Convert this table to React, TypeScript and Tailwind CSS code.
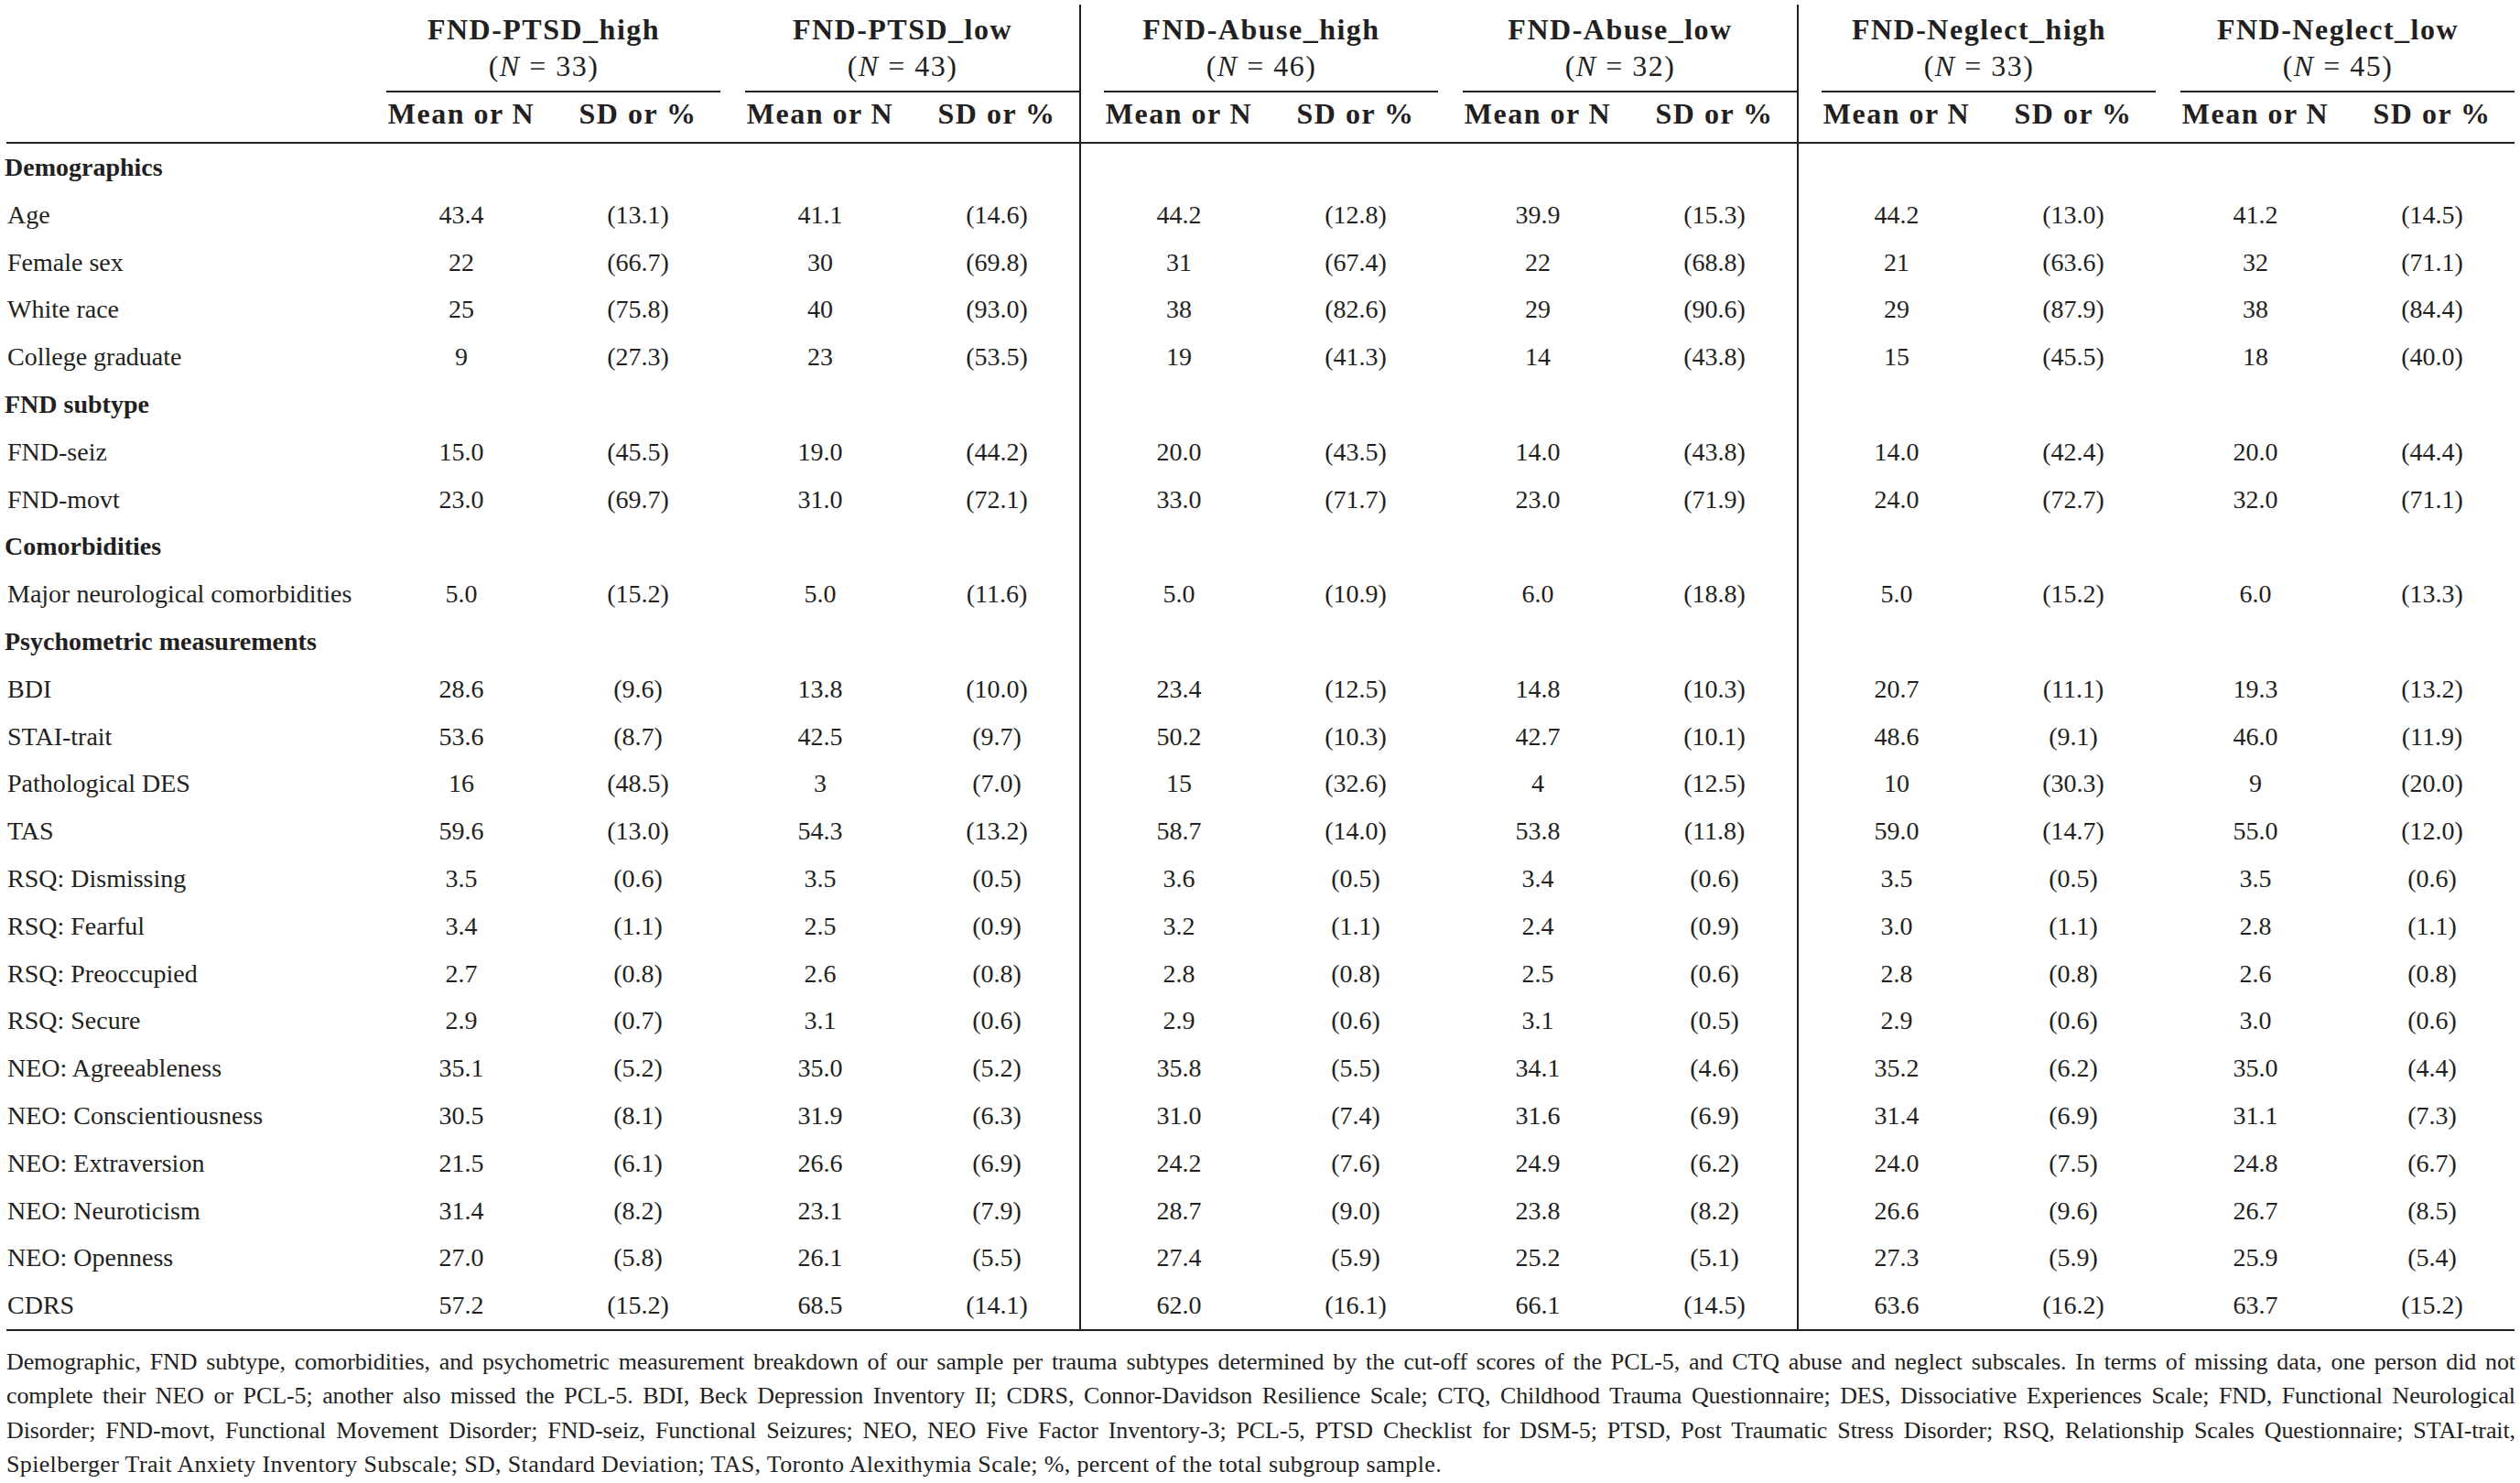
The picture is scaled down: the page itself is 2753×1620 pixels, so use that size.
import React from "react";

type Row =
  | { kind: "section"; label: string }
  | { kind: "data"; label: string; v: string[] };

const groups = [
  { name: "FND-PTSD_high", n: 33 },
  { name: "FND-PTSD_low", n: 43 },
  { name: "FND-Abuse_high", n: 46 },
  { name: "FND-Abuse_low", n: 32 },
  { name: "FND-Neglect_high", n: 33 },
  { name: "FND-Neglect_low", n: 45 },
];

const d = (label: string, s: string): Row => ({ kind: "data", label, v: s.split(" ") });
const sec = (label: string): Row => ({ kind: "section", label });

const rows: Row[] = [
  sec("Demographics"),
  d("Age", "43.4 (13.1) 41.1 (14.6) 44.2 (12.8) 39.9 (15.3) 44.2 (13.0) 41.2 (14.5)"),
  d("Female sex", "22 (66.7) 30 (69.8) 31 (67.4) 22 (68.8) 21 (63.6) 32 (71.1)"),
  d("White race", "25 (75.8) 40 (93.0) 38 (82.6) 29 (90.6) 29 (87.9) 38 (84.4)"),
  d("College graduate", "9 (27.3) 23 (53.5) 19 (41.3) 14 (43.8) 15 (45.5) 18 (40.0)"),
  sec("FND subtype"),
  d("FND-seiz", "15.0 (45.5) 19.0 (44.2) 20.0 (43.5) 14.0 (43.8) 14.0 (42.4) 20.0 (44.4)"),
  d("FND-movt", "23.0 (69.7) 31.0 (72.1) 33.0 (71.7) 23.0 (71.9) 24.0 (72.7) 32.0 (71.1)"),
  sec("Comorbidities"),
  d("Major neurological comorbidities", "5.0 (15.2) 5.0 (11.6) 5.0 (10.9) 6.0 (18.8) 5.0 (15.2) 6.0 (13.3)"),
  sec("Psychometric measurements"),
  d("BDI", "28.6 (9.6) 13.8 (10.0) 23.4 (12.5) 14.8 (10.3) 20.7 (11.1) 19.3 (13.2)"),
  d("STAI-trait", "53.6 (8.7) 42.5 (9.7) 50.2 (10.3) 42.7 (10.1) 48.6 (9.1) 46.0 (11.9)"),
  d("Pathological DES", "16 (48.5) 3 (7.0) 15 (32.6) 4 (12.5) 10 (30.3) 9 (20.0)"),
  d("TAS", "59.6 (13.0) 54.3 (13.2) 58.7 (14.0) 53.8 (11.8) 59.0 (14.7) 55.0 (12.0)"),
  d("RSQ: Dismissing", "3.5 (0.6) 3.5 (0.5) 3.6 (0.5) 3.4 (0.6) 3.5 (0.5) 3.5 (0.6)"),
  d("RSQ: Fearful", "3.4 (1.1) 2.5 (0.9) 3.2 (1.1) 2.4 (0.9) 3.0 (1.1) 2.8 (1.1)"),
  d("RSQ: Preoccupied", "2.7 (0.8) 2.6 (0.8) 2.8 (0.8) 2.5 (0.6) 2.8 (0.8) 2.6 (0.8)"),
  d("RSQ: Secure", "2.9 (0.7) 3.1 (0.6) 2.9 (0.6) 3.1 (0.5) 2.9 (0.6) 3.0 (0.6)"),
  d("NEO: Agreeableness", "35.1 (5.2) 35.0 (5.2) 35.8 (5.5) 34.1 (4.6) 35.2 (6.2) 35.0 (4.4)"),
  d("NEO: Conscientiousness", "30.5 (8.1) 31.9 (6.3) 31.0 (7.4) 31.6 (6.9) 31.4 (6.9) 31.1 (7.3)"),
  d("NEO: Extraversion", "21.5 (6.1) 26.6 (6.9) 24.2 (7.6) 24.9 (6.2) 24.0 (7.5) 24.8 (6.7)"),
  d("NEO: Neuroticism", "31.4 (8.2) 23.1 (7.9) 28.7 (9.0) 23.8 (8.2) 26.6 (9.6) 26.7 (8.5)"),
  d("NEO: Openness", "27.0 (5.8) 26.1 (5.5) 27.4 (5.9) 25.2 (5.1) 27.3 (5.9) 25.9 (5.4)"),
  d("CDRS", "57.2 (15.2) 68.5 (14.1) 62.0 (16.1) 66.1 (14.5) 63.6 (16.2) 63.7 (15.2)"),
];

const GRID = "grid grid-cols-[396px_repeat(6,206px_180px_6px)]";
const hasDivider = (g: number) => g === 1 || g === 3;

function Gap({ g }: { g: number }) {
  return <div className={hasDivider(g) ? "border-l-2 border-[#231f20]" : ""} />;
}

function Rule() {
  return <div className="ml-[2px] mr-[6px] h-[2px] bg-[#231f20]" />;
}

export default function App() {
  return (
    <div className="w-[2753px] h-[1620px] overflow-hidden bg-white pl-[5px] text-[#231f20] font-['Liberation_Serif',serif]">
      {/* Group titles */}
      <div className={GRID}>
        <div />
        {groups.map((g, i) => (
          <React.Fragment key={g.name}>
            <div className="col-span-2 pt-[12px] text-center text-[32px] leading-[40px] tracking-[1.5px]">
              <div className="font-bold">{g.name}</div>
              <div>
                (<i>N</i> = {g.n})
              </div>
              <div className="ml-[21px] mt-[7px] h-[2px] bg-[#231f20]" />
            </div>
            <div className="pt-[5px]">
              {hasDivider(i) && <div className="h-full border-l-2 border-[#231f20]" />}
            </div>
          </React.Fragment>
        ))}
      </div>

      {/* Mean / SD headers */}
      <div className={GRID + " h-[54px]"}>
        <div />
        {groups.map((g, i) => (
          <React.Fragment key={g.name}>
            <div className="pt-[3px] text-center text-[32px] font-bold leading-[40px] tracking-[1.5px] whitespace-nowrap">
              Mean or N
            </div>
            <div className="pt-[3px] text-center text-[32px] font-bold leading-[40px] tracking-[1.5px] whitespace-nowrap">
              SD or %
            </div>
            <Gap g={i} />
          </React.Fragment>
        ))}
      </div>

      <Rule />

      {/* Body */}
      {rows.map((r) => (
        <div key={r.label} className={GRID + " h-[51.8px] text-[28px] leading-[51.8px]"}>
          {r.kind === "section" ? (
            <div className="font-bold whitespace-nowrap">{r.label}</div>
          ) : (
            <div className="pl-[3px] whitespace-nowrap">{r.label}</div>
          )}
          {groups.map((g, i) => (
            <React.Fragment key={g.name}>
              <div className="text-center">{r.kind === "data" ? r.v[i * 2] : ""}</div>
              <div className="text-center">{r.kind === "data" ? r.v[i * 2 + 1] : ""}</div>
              <Gap g={i} />
            </React.Fragment>
          ))}
        </div>
      ))}

      <Rule />

      {/* Footnote */}
      <div className="ml-[2px] mr-[5px] mt-[15px] text-[26px] leading-[37.3px] tracking-[-0.1px]">
        <p className="text-justify [text-align-last:justify]">
          Demographic, FND subtype, comorbidities, and psychometric measurement breakdown of our sample per trauma subtypes determined by the cut-off scores of the PCL-5, and CTQ abuse and neglect subscales. In terms of missing data, one person did not
        </p>
        <p className="text-justify [text-align-last:justify]">
          complete their NEO or PCL-5; another also missed the PCL-5. BDI, Beck Depression Inventory II; CDRS, Connor-Davidson Resilience Scale; CTQ, Childhood Trauma Questionnaire; DES, Dissociative Experiences Scale; FND, Functional Neurological
        </p>
        <p className="text-justify [text-align-last:justify]">
          Disorder; FND-movt, Functional Movement Disorder; FND-seiz, Functional Seizures; NEO, NEO Five Factor Inventory-3; PCL-5, PTSD Checklist for DSM-5; PTSD, Post Traumatic Stress Disorder; RSQ, Relationship Scales Questionnaire; STAI-trait,
        </p>
        <p className="tracking-[0.35px]">
          Spielberger Trait Anxiety Inventory Subscale; SD, Standard Deviation; TAS, Toronto Alexithymia Scale; %, percent of the total subgroup sample.
        </p>
      </div>
    </div>
  );
}
